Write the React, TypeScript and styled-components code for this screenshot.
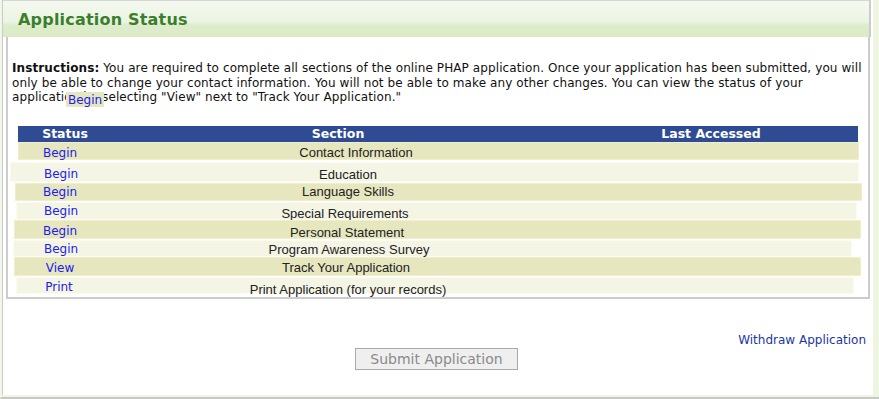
import React from "react";
import styled, { createGlobalStyle } from "styled-components";

const Global = createGlobalStyle`
  html, body { margin: 0; padding: 0; background: #fff; }
  body { font-family: "DejaVu Sans", Verdana, sans-serif; }
  * { box-sizing: border-box; }
`;

const Frame = styled.div`
  width: 879px;
  height: 399px;
  background: #eef5e0;
  border-left: 1px solid #f4f6f0;
  border-bottom: 2px solid #c8c8c8;
  padding: 0 6px 2px 1px;
  display: flex;
`;

const Panel = styled.div`
  flex: 1;
  background: #fff;
  border-left: 1px solid #ccc;
  display: flex;
  flex-direction: column;
`;

const Header = styled.div`
  height: 37px;
  margin-right: 2px;
  border-top: 1px solid #d6d6d6;
  border-right: 2px solid #ccc;
  background: linear-gradient(#f4f9ef 0%, #ecf5e4 55%, #ddedcb 68%, #dbebc8 100%);
  display: flex;
  align-items: center;
  padding-left: 15px;
`;

const Title = styled.h1`
  margin: 0;
  font-family: "DejaVu Sans", Verdana, sans-serif;
  font-size: 16px;
  font-weight: bold;
  color: #3b7e2d;
  letter-spacing: 0.2px;
`;

const ContentBox = styled.div`
  margin: 0 3px 0 3px;
  height: 262px;
  border: 2px solid #ccc;
  border-top: none;
  display: flex;
  flex-direction: column;
`;

const Instructions = styled.p`
  position: relative;
  margin: 24px 0 0 4px;
  font-size: 12px;
  line-height: 14.5px;
  letter-spacing: 0.1px;
  color: #111;
  white-space: nowrap;
`;

const Stray = styled.span`
  position: absolute;
  left: 54px;
  top: 31px;
  height: 15px;
  padding: 0 2px;
  background: #e6e6c0;
  color: #2020ee;
  font-size: 12px;
  letter-spacing: 0;
  line-height: 16px;
`;

const Table = styled.div`
  margin: 21px 0 0 10px;
  width: 840px;
  display: flex;
  flex-direction: column;
`;

const HeadRow = styled.div`
  height: 16px;
  background: #2f4b93;
  display: grid;
  grid-template-columns: 94px 452px 294px;
  color: #fff;
  font-weight: bold;
  font-size: 12.5px;
  line-height: 16px;
  text-align: center;
`;

const Row = styled.div<{ $dark: boolean; $left: number; $w: number; $h: number; $gap: number }>`
  margin-left: ${(p) => p.$left}px;
  width: ${(p) => p.$w}px;
  height: ${(p) => p.$h}px;
  margin-top: ${(p) => p.$gap}px;
  background: ${(p) => (p.$dark ? "#e6e6bf" : "#f5f5e6")};
  border: 1px solid ${(p) => (p.$dark ? "#efefcb" : "#fbfbee")};
  display: flex;
  align-items: flex-start;
`;

const StatusCell = styled.div<{ $w: number; $dy: number }>`
  width: ${(p) => p.$w}px;
  flex: none;
  margin-top: ${(p) => p.$dy}px;
  display: flex;
  justify-content: center;
`;

const StatusLink = styled.a`
  color: #2020ee;
  font-size: 12px;
  line-height: 15px;
  text-decoration: none;
  padding: 0 3px;
`;

const SectionCell = styled.div<{ $w: number; $dy: number }>`
  width: ${(p) => p.$w}px;
  flex: none;
  margin-top: ${(p) => p.$dy}px;
  text-align: center;
  white-space: nowrap;
  font-family: "Liberation Sans", Arial, sans-serif;
  font-size: 13px;
  line-height: 15px;
  color: #222;
`;

const Bottom = styled.div`
  flex: 1;
  display: flex;
  flex-direction: column;
  align-items: center;
`;

const Withdraw = styled.a`
  align-self: flex-end;
  margin: 34px 7px 0 0;
  color: #1c35a6;
  font-size: 12px;
  line-height: 15px;
  text-decoration: none;
`;

const SubmitBtn = styled.button`
  margin: 0 0 0 -3px;
  width: 163px;
  height: 22px;
  background: #efefef;
  border: 1px solid #aaa;
  color: #8a8a8a;
  font-family: "DejaVu Sans", Verdana, sans-serif;
  font-size: 14px;
  padding: 0;
`;

type R = {
  status: string;
  name: string;
  dark: boolean;
  x: number; // absolute left of row
  w: number;
  h: number;
  gap: number;
  sx: number; // status center (absolute)
  nx: number; // name center (absolute)
  sdy: number;
  ndy: number;
};

const TABLE_X = 18;

const rows: R[] = [
  { status: "Begin", name: "Contact Information", dark: true, x: 18, w: 841, h: 18, gap: 0, sx: 60, nx: 356, sdy: 3, ndy: 2 },
  { status: "Begin", name: "Education", dark: false, x: 10, w: 849, h: 20, gap: 2, sx: 61, nx: 348, sdy: 4, ndy: 4 },
  { status: "Begin", name: "Language Skills", dark: true, x: 15, w: 847, h: 18, gap: 1, sx: 60, nx: 348, sdy: 1, ndy: 0 },
  { status: "Begin", name: "Special Requirements", dark: false, x: 16, w: 841, h: 18, gap: 1, sx: 61, nx: 345, sdy: 1, ndy: 3 },
  { status: "Begin", name: "Personal Statement", dark: true, x: 14, w: 847, h: 19, gap: 0, sx: 60, nx: 347, sdy: 3, ndy: 4 },
  { status: "Begin", name: "Program Awareness Survey", dark: false, x: 13, w: 839, h: 17, gap: 1, sx: 61, nx: 349, sdy: 1, ndy: 1 },
  { status: "View", name: "Track Your Application", dark: true, x: 14, w: 847, h: 19, gap: 0, sx: 60, nx: 346, sdy: 3, ndy: 2 },
  { status: "Print", name: "Print Application (for your records)", dark: false, x: 16, w: 838, h: 17, gap: 1, sx: 59, nx: 348, sdy: 2, ndy: 4 },
];

export default function App() {
  return (
    <>
      <Global />
      <Frame>
        <Panel>
          <Header>
            <Title>Application Status</Title>
          </Header>
          <ContentBox>
            <Instructions>
              <b>Instructions:</b> You are required to complete all sections of the online PHAP application. Once your application has been submitted, you will
              <br />
              only be able to change your contact information. You will not be able to make any other changes. You can view the status of your
              <br />
              application by selecting "View" next to "Track Your Application."
              <Stray>Begin</Stray>
            </Instructions>
            <Table>
              <HeadRow>
                <span>Status</span>
                <span>Section</span>
                <span>Last Accessed</span>
              </HeadRow>
              {rows.map((r) => {
                const inner = r.x + 1;
                const statusW = 2 * (r.sx - inner);
                const nameW = 2 * (r.nx - (inner + statusW));
                return (
                  <Row key={r.name} $dark={r.dark} $left={r.x - TABLE_X} $w={r.w} $h={r.h} $gap={r.gap}>
                    <StatusCell $w={statusW} $dy={r.sdy}>
                      <StatusLink href="#">{r.status}</StatusLink>
                    </StatusCell>
                    <SectionCell $w={nameW} $dy={r.ndy}>{r.name}</SectionCell>
                  </Row>
                );
              })}
            </Table>
          </ContentBox>
          <Bottom>
            <Withdraw href="#">Withdraw Application</Withdraw>
            <SubmitBtn disabled>Submit Application</SubmitBtn>
          </Bottom>
        </Panel>
      </Frame>
    </>
  );
}
